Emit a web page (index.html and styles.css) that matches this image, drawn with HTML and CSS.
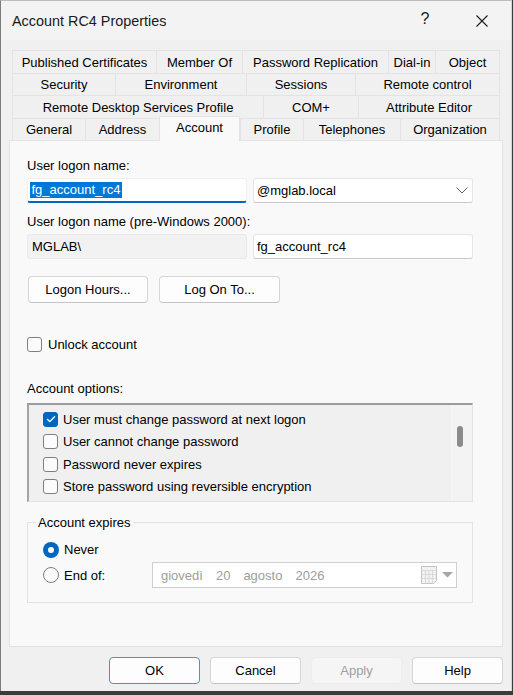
FILE: index.html
```html
<!DOCTYPE html>
<html>
<head>
<meta charset="utf-8">
<title>Account RC4 Properties</title>
<link rel="stylesheet" href="styles.css">
</head>
<body>
<div class="window">
  <div class="titlebar">
    <span class="title">Account RC4 Properties</span>
    <span class="tbtn help">?</span>
    <span class="tbtn close"><svg width="12" height="12" viewBox="0 0 12 12"><path d="M0.5 0.5 L11.5 11.5 M11.5 0.5 L0.5 11.5" stroke="#1b1b1b" stroke-width="1.1" fill="none"/></svg></span>
  </div>

  <div class="tabs">
    <div class="tabrow r1">
      <div class="tab">Published Certificates</div>
      <div class="tab">Member Of</div>
      <div class="tab">Password Replication</div>
      <div class="tab">Dial-in</div>
      <div class="tab">Object</div>
    </div>
    <div class="tabrow r2">
      <div class="tab">Security</div>
      <div class="tab">Environment</div>
      <div class="tab">Sessions</div>
      <div class="tab">Remote control</div>
    </div>
    <div class="tabrow r3">
      <div class="tab">Remote Desktop Services Profile</div>
      <div class="tab">COM+</div>
      <div class="tab">Attribute Editor</div>
    </div>
    <div class="tabrow r4">
      <div class="tab">General</div>
      <div class="tab">Address</div>
      <div class="tab sel">Account</div>
      <div class="tab">Profile</div>
      <div class="tab">Telephones</div>
      <div class="tab">Organization</div>
    </div>
  </div>

  <div class="panel">
    <div class="label l1">User logon name:</div>
    <div class="fieldrow">
      <div class="edit focus"><span class="selected">fg_account_rc4</span></div>
      <div class="edit combo"><span>@mglab.local</span><svg width="12" height="7" viewBox="0 0 12 7"><path d="M0.5 0.5 L6 6 L11.5 0.5" stroke="#606060" stroke-width="1" fill="none"/></svg></div>
    </div>
    <div class="label l2">User logon name (pre-Windows 2000):</div>
    <div class="fieldrow">
      <div class="edit readonly">MGLAB\</div>
      <div class="edit">fg_account_rc4</div>
    </div>
    <div class="btnrow">
      <div class="btn w120">Logon Hours...</div>
      <div class="btn w121">Log On To...</div>
    </div>
    <div class="check"><span class="box"></span>Unlock account</div>
    <div class="label l3">Account options:</div>
    <div class="listbox">
      <div class="items">
        <div class="item"><span class="box on"><svg width="10" height="8" viewBox="0 0 10 8"><path d="M1 4 L3.8 6.6 L9 1.2" stroke="#fff" stroke-width="1.3" fill="none"/></svg></span>User must change password at next logon</div>
        <div class="item"><span class="box"></span>User cannot change password</div>
        <div class="item"><span class="box"></span>Password never expires</div>
        <div class="item"><span class="box"></span>Store password using reversible encryption</div>
      </div>
      <div class="scroll"><div class="thumb"></div></div>
    </div>
    <fieldset class="group">
      <legend>Account expires</legend>
      <div class="radiorow never"><span class="radio on"><span class="dot"></span></span>Never</div>
      <div class="radiorow endof">
        <div class="rlabel"><span class="radio"></span>End of:</div>
        <div class="picker">
          <div class="dateparts"><span>giovedì</span><span>20</span><span>agosto</span><span>2026</span></div>
          <svg class="cal" width="16" height="18" viewBox="0 0 16 18"><path d="M0.5 0.5H15.5V14.5L12.5 17.5H0.5Z" fill="#f2f2f2" stroke="#c4c4c4"/><path d="M0.5 4.5H15.5M4.5 4.5V17.5M8 4.5V17.5M11.5 4.5V17.5M0.5 8.5H15.5M0.5 12.5H15.5" stroke="#dadada"/></svg>
          <svg width="11" height="6" viewBox="0 0 11 6"><polygon points="0,0 11,0 5.5,5.5" fill="#a6a6a6"/></svg>
        </div>
      </div>
    </fieldset>
  </div>

  <div class="footer">
    <div class="btn fbtn ok">OK</div>
    <div class="btn fbtn">Cancel</div>
    <div class="btn fbtn apply">Apply</div>
    <div class="btn fbtn">Help</div>
  </div>
</div>
</body>
</html>
```

FILE: styles.css
```css
html, body {
  margin: 0;
  padding: 0;
}
body {
  width: 513px;
  height: 695px;
  overflow: hidden;
  background: #3b3b3b;
  font-family: "Liberation Sans", Arial, sans-serif;
  font-size: 13px;
  color: #000;
}
.window {
  box-sizing: border-box;
  width: 512px;
  height: 691px;
  background: #f0f0f0;
  border-left: 1px solid #7c7c7c;
  border-right: 1px solid #d4d4d4;
  border-top: 1px solid #bdbdbd;
}
.titlebar {
  height: 39px;
  display: flex;
  align-items: center;
  padding: 0 6px 0 11px;
  background: #f3f3f3;
}
.title {
  flex: 1;
  font-size: 14.4px;
  color: #1a1a1a;
  white-space: nowrap;
}
.tbtn {
  width: 46px;
  height: 39px;
  display: flex;
  align-items: center;
  justify-content: center;
  box-sizing: border-box;
}
.help {
  margin-right: 11px;
  font-size: 16px;
  color: #1a1a1a;
  padding-bottom: 3px;
}

/* Tabs */
.tabs {
  margin: 10px 0 0 11px;
  width: 488px;
}
.tabrow {
  display: grid;
}
.r1 { grid-template-columns: 144px 86px 146px 47px 65px; height: 23px; }
.r2 { grid-template-columns: 103px 131px 109px 145px; height: 22px; }
.r3 { grid-template-columns: 251px 95px 142px; height: 23px; }
.r4 { grid-template-columns: 73px 74px 81px 63px 97px 100px; height: 22px; }
.tab {
  box-sizing: border-box;
  border-top: 1px solid #e3e3e3;
  border-left: 1px solid #e3e3e3;
  background: #f0f0f0;
  display: flex;
  align-items: center;
  justify-content: center;
  white-space: nowrap;
}
.tab:last-child {
  border-right: 1px solid #e3e3e3;
}
.tab.sel {
  background: #f9f9f9;
  margin-top: -2px;
  margin-bottom: -1px;
  padding-bottom: 3px;
  border-right: 1px solid #e3e3e3;
  position: relative;
  z-index: 1;
}

/* Panel */
.panel {
  box-sizing: border-box;
  margin-left: 8px;
  width: 494px;
  height: 507px;
  border: 1px solid #e3e3e3;
  background: #f9f9f9;
  padding: 0 29px 0 17px;
}
.label {
  height: 15px;
  line-height: 15px;
  white-space: nowrap;
}
.l1 { margin-top: 17px; }
.l2 { margin-top: 11px; }
.l3 { margin-top: 28px; }

.fieldrow {
  display: flex;
  gap: 6px;
  margin-top: 5px;
  height: 25px;
}
.edit {
  box-sizing: border-box;
  width: 220px;
  height: 25px;
  background: #fff;
  border: 1px solid #e6e6e6;
  border-bottom-color: #c8c8c8;
  border-radius: 3px;
  padding-left: 3px;
  display: flex;
  align-items: center;
  white-space: nowrap;
}
.edit.focus {
  border-color: #f0f0f0;
  border-bottom: 2px solid #0067c0;
  padding-left: 2px;
}
.selected {
  background: #0078d7;
  color: #fff;
  line-height: 16px;
  padding: 0 1.5px;
}
.edit.readonly {
  background: #f2f2f2;
  border-color: #e9e9e9;
  padding-left: 4px;
}
.combo {
  justify-content: space-between;
  padding: 0 4px 0 3px;
}

.btnrow {
  display: flex;
  gap: 11px;
  margin-top: 17px;
  padding-left: 1px;
}
.btn {
  box-sizing: border-box;
  height: 27px;
  background: #fdfdfd;
  border: 1px solid #d6d6d6;
  border-bottom-color: #c4c4c4;
  border-radius: 4px;
  display: flex;
  align-items: center;
  justify-content: center;
  white-space: nowrap;
}
.w120 { width: 120px; }
.w121 { width: 121px; }

.check {
  display: flex;
  align-items: center;
  gap: 6px;
  height: 17px;
  line-height: 17px;
  margin-top: 33px;
}
.box {
  box-sizing: border-box;
  width: 15px;
  height: 15px;
  flex: none;
  border: 1px solid #7f7f7f;
  border-radius: 3px;
  background: #fbfbfb;
}
.box.on {
  background: #0067c0;
  border-color: #0067c0;
  display: flex;
  align-items: center;
  justify-content: center;
}

.listbox {
  box-sizing: border-box;
  display: flex;
  height: 99px;
  margin-top: 7px;
  border-top: 2px solid #9c9c9c;
  border-left: 2px solid #a4a4a4;
  border-right: 1px solid #e3e3e3;
  border-bottom: 1px solid #e3e3e3;
  background: #f0f0f0;
  overflow: hidden;
}
.items {
  flex: 1;
  padding: 3px 0 0 14px;
}
.item {
  display: flex;
  align-items: center;
  gap: 5px;
  height: 22.5px;
  white-space: nowrap;
}
.scroll {
  box-sizing: border-box;
  width: 21px;
  background: #f3f3f3;
  border-left: 1px solid #f6f6f6;
  padding-top: 21px;
}
.thumb {
  width: 6px;
  height: 21px;
  margin-left: 5px;
  background: #8b8b8b;
  border-radius: 3px;
}

.group {
  margin: 13px 0 0 0;
  padding: 0 14px 14px 8px;
  border: 1px solid #e3e3e3;
  min-width: 0;
}
.group legend {
  padding: 0 2px;
  line-height: 15px;
}
.radiorow {
  display: flex;
  align-items: center;
  padding-left: 7px;
  white-space: nowrap;
}
.never {
  height: 17px;
  margin-top: 11px;
  gap: 5px;
}
.endof {
  height: 26px;
  margin-top: 4px;
}
.rlabel {
  width: 109px;
  display: flex;
  align-items: center;
  gap: 5px;
}
.radio {
  box-sizing: border-box;
  width: 16px;
  height: 16px;
  flex: none;
  border-radius: 50%;
  border: 1px solid #7f7f7f;
  background: #fbfbfb;
}
.radio.on {
  border: none;
  background: #0067c0;
  display: flex;
  align-items: center;
  justify-content: center;
}
.dot {
  width: 6px;
  height: 6px;
  border-radius: 50%;
  background: #fff;
}
.picker {
  box-sizing: border-box;
  width: 305px;
  height: 26px;
  border: 1px solid #cfcfcf;
  background: #fff;
  display: flex;
  align-items: center;
  padding: 0 3px 0 8px;
  color: #9d9d9d;
}
.dateparts {
  flex: 1;
  display: flex;
  gap: 13px;
}
.cal {
  margin-right: 5px;
}

.footer {
  display: flex;
  justify-content: flex-end;
  gap: 10px;
  margin-top: 10px;
  padding-right: 8px;
}
.fbtn {
  width: 91px;
}
.ok {
  border-color: #4a90d9;
}
.apply {
  background: #f5f5f5;
  border-color: #ededed;
  color: #a0a0a0;
}
```
